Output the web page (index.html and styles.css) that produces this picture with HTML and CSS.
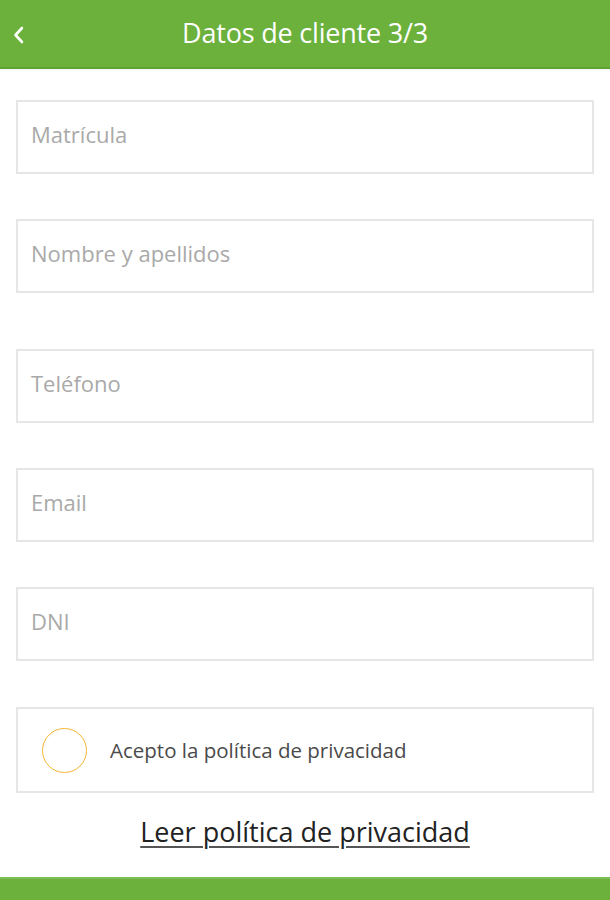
FILE: index.html
```html
<!DOCTYPE html>
<html lang="es">
<head>
<meta charset="utf-8">
<title>Datos de cliente 3/3</title>
<link rel="stylesheet" href="styles.css">
</head>
<body>
<div class="screen">
  <header class="topbar">
    <button class="back" aria-label="Volver">
      <svg width="14" height="20" viewBox="0 0 14 20"><path d="M10 3 L3.5 10 L10 17" fill="none" stroke="#fff" stroke-width="2.6" stroke-linecap="round" stroke-linejoin="round"/></svg>
    </button>
    <h1 class="title">Datos de cliente 3/3</h1>
  </header>
  <main class="form">
    <div class="field">Matrícula</div>
    <div class="field">Nombre y apellidos</div>
    <div class="field field-wide-gap">Teléfono</div>
    <div class="field">Email</div>
    <div class="field">DNI</div>
    <div class="check-box">
      <span class="circle"></span>
      <span class="check-label">Acepto la política de privacidad</span>
    </div>
    <a class="policy-link" href="#">Leer política de privacidad</a>
  </main>
  <footer class="bottombar"></footer>
</div>
</body>
</html>
```
FILE: styles.css
```css
* { box-sizing: border-box; }
html, body { margin: 0; padding: 0; background: #fff; }
body { font-family: "Open Sans", "Noto Sans", sans-serif; }
.screen { width: 610px; height: 900px; display: flex; flex-direction: column; overflow: hidden; }
.topbar {
  height: 69px;
  background: #6bb13c;
  border-bottom: 2px solid #5fa332;
  display: flex;
  align-items: center;
  justify-content: center;
  position: relative;
  box-shadow: 0 1px 2px rgba(0,0,0,0.06);
}
.back {
  position: absolute;
  left: 11px;
  top: 24px;
  background: none;
  border: 0;
  padding: 0;
  width: 16px;
  height: 22px;
  display: flex;
  align-items: center;
  justify-content: center;
}
.title { margin: 0; color: #fff; font-weight: 400; font-size: 27px; margin-top: -2px; letter-spacing: -0.2px; }
.form { flex: 1; padding: 31px 16px 0 16px; display: flex; flex-direction: column; }
.field {
  height: 74px;
  border: 2px solid #e6e6e6;
  padding: 0 13px 7px;
  display: flex;
  align-items: center;
  color: #a9a9a9;
  font-size: 22px;
  margin-bottom: 45px;
}
.field-wide-gap { margin-top: 11px; }
.check-box {
  height: 86px;
  border: 2px solid #e6e6e6;
  display: flex;
  align-items: center;
  padding-left: 24px;
  gap: 23px;
  margin-top: 1px;
}
.circle {
  width: 45px; height: 45px;
  border-radius: 50%;
  border: 1.5px solid #f4b633;
  flex: none;
}
.check-label { color: #4a4a4a; font-size: 20.5px; }
.policy-link {
  align-self: center;
  margin-top: 20px;
  color: #222;
  font-size: 27px;
  text-decoration: underline;
  text-decoration-thickness: 2px;
  text-underline-offset: 4px;
  text-decoration-color: #555;
}
.bottombar { height: 23px; background: #6bb13c; border-top: 2px solid #7dbd55; flex: none; }
```
